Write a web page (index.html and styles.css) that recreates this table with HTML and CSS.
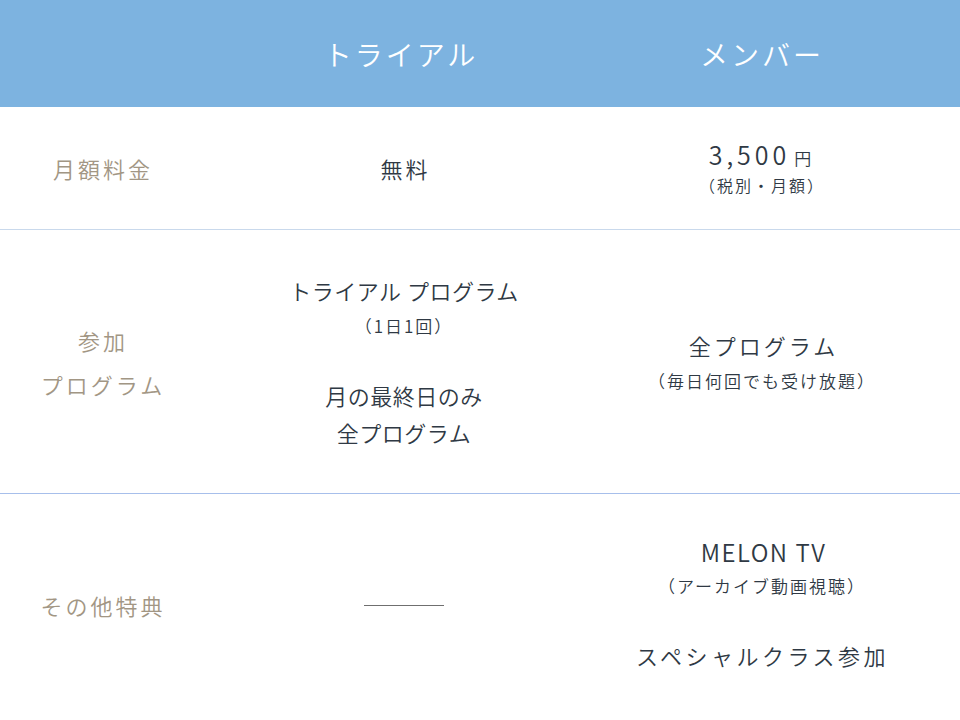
FILE: index.html
```html
<!DOCTYPE html>
<html lang="ja">
<head>
<meta charset="utf-8">
<link rel="stylesheet" href="styles.css">
</head>
<body>
<div class="plans">
  <div class="row head">
    <div class="cell"></div>
    <div class="cell"><span class="head-text trial-head">トライアル</span></div>
    <div class="cell"><span class="head-text">メンバー</span></div>
  </div>
  <div class="row r1">
    <div class="cell label"><span>月額料金</span></div>
    <div class="cell"><p class="main">無料</p></div>
    <div class="cell member">
      <p class="price">3,500<span class="yen">円</span></p>
      <p class="note small">（税別・月額）</p>
    </div>
  </div>
  <div class="row r2">
    <div class="cell label"><span>参加<br>プログラム</span></div>
    <div class="cell trial">
      <p class="main tight">トライアル プログラム</p>
      <p class="note tall">（1日1回）</p>
      <p class="main tight gap">月の最終日のみ<br>全プログラム</p>
    </div>
    <div class="cell member">
      <p class="main">全プログラム</p>
      <p class="note tall">（毎日何回でも受け放題）</p>
    </div>
  </div>
  <div class="row r3">
    <div class="cell label"><span>その他特典</span></div>
    <div class="cell"><span class="dash"></span></div>
    <div class="cell member">
      <p class="main latin">MELON TV</p>
      <p class="note">（アーカイブ動画視聴）</p>
      <p class="main gap2">スペシャルクラス参加</p>
    </div>
  </div>
</div>
</body>
</html>
```

FILE: styles.css
```css
html, body {
  margin: 0;
  padding: 0;
  background: #ffffff;
}
body {
  font-family: "Noto Sans CJK JP", "Noto Sans", sans-serif;
  font-weight: 350;
  color: #2f3944;
  width: 960px;
  height: 720px;
  overflow: hidden;
}
p { margin: 0; }
.plans {
  display: flex;
  flex-direction: column;
}
.row {
  display: grid;
  grid-template-columns: 206px 396px 320px 1fr;
}
.cell {
  display: flex;
  flex-direction: column;
  align-items: center;
  justify-content: center;
  text-align: center;
}
.head {
  background: #7db3e0;
  height: 107px;
}
.head-text {
  color: #ffffff;
  font-size: 28px;
  letter-spacing: 3px;
  line-height: 1;
}
.trial-head { margin-right: 6px; }
.r1 {
  height: 122px;
  border-bottom: 1px solid #c9d9ec;
}
.r2 {
  height: 263px;
  border-bottom: 1px solid #a7bfeb;
}
.r3 {
  height: 222px;
}
.label {
  color: #a29684;
  font-size: 22px;
  letter-spacing: 3px;
  line-height: 44px;
}
.main {
  font-size: 22px;
  letter-spacing: 3px;
  line-height: 37px;
  margin-right: -3px;
}
.main.tight {
  letter-spacing: 0.5px;
  margin-right: 0;
}
.main.gap { margin-top: 35px; }
.main.gap2 { margin-top: 38px; }
.main.latin {
  letter-spacing: 1.5px;
  font-size: 24px;
  margin-top: -3px;
  margin-bottom: 3px;
}
.member .main.gap2 {
  letter-spacing: 3.5px;
  margin-right: -1px;
}
.note {
  font-size: 17px;
  letter-spacing: 2px;
  line-height: 26px;
}
.note.tall { line-height: 33px; }
.note.small {
  font-size: 16px;
  line-height: 24px;
}
.price {
  font-size: 25px;
  letter-spacing: 4px;
  line-height: 30px;
  margin-right: 4px;
}
.yen {
  font-size: 17px;
  letter-spacing: 0;
  margin-left: 4px;
}
.dash {
  display: block;
  width: 80px;
  height: 1px;
  background: #6f6f6f;
}
```
